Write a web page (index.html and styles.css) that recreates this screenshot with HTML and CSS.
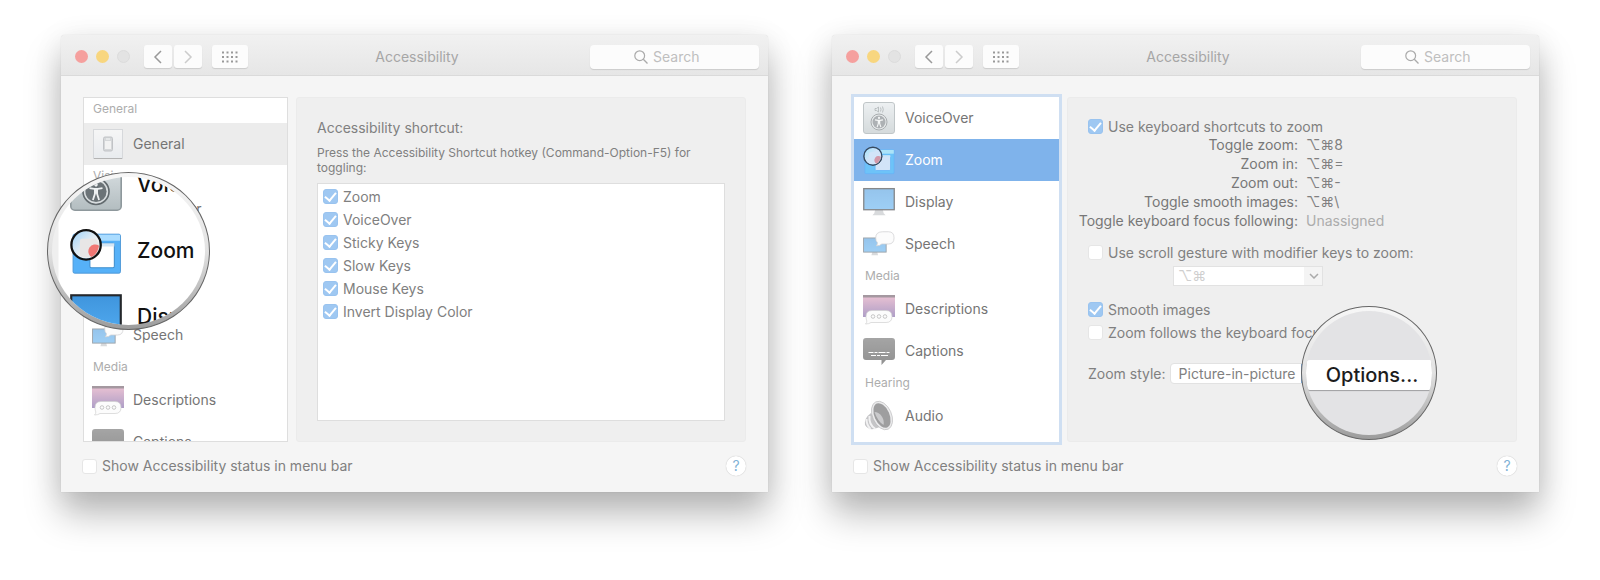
FILE: index.html
```html
<!DOCTYPE html>
<html lang="en">
<head>
<meta charset="utf-8">
<title>Accessibility</title>
<link rel="stylesheet" href="styles.css">
</head>
<body>
<svg class="sprite" aria-hidden="true">
  <defs>
    <linearGradient id="g-tile" x1="0" y1="0" x2="0" y2="1"><stop offset="0" stop-color="#dfe5e8"/><stop offset="1" stop-color="#b3bdc0"/></linearGradient>
    <linearGradient id="g-screen" x1="0" y1="0" x2="0" y2="1"><stop offset="0" stop-color="#3f95dd"/><stop offset="1" stop-color="#4fa8ee"/></linearGradient>
    <linearGradient id="g-dusk" x1="0" y1="0" x2="0" y2="1"><stop offset="0" stop-color="#dd93b0"/><stop offset="1" stop-color="#6c4f9a"/></linearGradient>
    <linearGradient id="g-dark" x1="0" y1="0" x2="0" y2="1"><stop offset="0" stop-color="#5c5c5c"/><stop offset="1" stop-color="#383838"/></linearGradient>
    <linearGradient id="g-lens" x1="0" y1="0" x2="1" y2="1"><stop offset="0" stop-color="#9fd4fb"/><stop offset=".6" stop-color="#f0f0f0"/><stop offset="1" stop-color="#dfe9f2"/></linearGradient>
    <linearGradient id="g-paper" x1="0" y1="0" x2="0" y2="1"><stop offset="0" stop-color="#ffffff"/><stop offset="1" stop-color="#e6ebf1"/></linearGradient>
  </defs>
  <symbol id="i-general" viewBox="0 0 32 32">
    <rect x="1.500" y="1.500" width="29" height="29" fill="url(#g-paper)" stroke="#c5c9ce"/>
    <path d="M2 30.500h28" stroke="#888"/>
    <rect x="11.500" y="9" width="9" height="14" rx="1.500" fill="#c3c7cb" stroke="#9ea2a8"/>
    <rect x="13" y="13" width="6" height="8" fill="#f8f8f8"/>
    <path d="M14 11h4" stroke="#fff"/>
  </symbol>
  <symbol id="i-voiceover" viewBox="0 0 32 32">
    <rect x=".5" y=".5" width="31" height="31" rx="2.500" fill="url(#g-tile)" stroke="#8e989c"/>
    <path d="M12 6.500h1.500l2-1.500v5l-2-1.500H12zM17.500 5.500q1 2 0 4M19.500 4.500q1.500 3 0 6" fill="none" stroke="#6f787c" stroke-width=".8"/>
    <circle cx="16" cy="20" r="8" fill="#d8dddf" stroke="#626a6e" stroke-width="1"/>
    <circle cx="16" cy="20" r="6.500" fill="#6b7377"/>
    <circle cx="16" cy="15.900" r="1.100" fill="#eef1f2"/>
    <path d="M12 17.900l2.900.5h2.200l2.900-.5M16 18.400v3M15.300 18.400v3.200l-1.200 3.600M16.700 18.400v3.200l1.200 3.600" fill="none" stroke="#eef1f2" stroke-width="1.100"/>
  </symbol>
  <symbol id="i-zoom" viewBox="0 0 34 32">
    <rect x="2" y="5" width="31" height="25.500" rx="1" fill="#56b1f8" stroke="#4a96d6" stroke-width=".6"/>
    <path d="M2.300 5.300h30.400v4H2.300z" fill="#aadcff"/>
    <rect x="13" y="11" width="16" height="16" rx="1" fill="#fff" stroke="#3f8ecd" stroke-width=".7"/>
    <path d="M13 11h16v2H13z" fill="#d5e6f4"/>
    <circle cx="10.500" cy="12" r="9" fill="url(#g-lens)"/>
    <path d="M8 8h9l2 4-1 5-4 3H8q-1.500 0-1.500-1.500v-9Q6.500 8 8 8z" fill="#e8e6e6"/>
    <path d="M19 12.500a4.300 4.300 0 1 0-5 7.500q4-2 5-7.500z" fill="#f07774"/>
    <circle cx="10.500" cy="12" r="9.600" fill="none" stroke="#111" stroke-width="1.500"/>
  </symbol>
  <symbol id="i-display" viewBox="0 0 34 32">
    <path d="M13 24h8l1 4 2 2H10l2-2z" fill="#b9bcc0"/>
    <rect x=".8" y="1.800" width="32.400" height="22.400" fill="url(#g-screen)" stroke="#24272b" stroke-width="1.400"/>
  </symbol>
  <symbol id="i-speech" viewBox="0 0 34 32">
    <path d="M10 24h5l1 4H9z" fill="#b9bcc0"/>
    <rect x=".6" y="9.600" width="24" height="15" fill="url(#g-screen)" stroke="#4f5a66" stroke-width="1"/>
    <path d="M21 3h6q6 0 6 6.500t-6 6.500h-7q-2 2-6 2 1.500-1.500 1.300-3.500Q13.500 13 13.500 9.500 13.500 3 21 3z" fill="#fbfbfb" stroke="#a9a9ad" stroke-width=".8"/>
  </symbol>
  <symbol id="i-descriptions" viewBox="0 0 32 32">
    <rect y="2" width="32" height="22" fill="url(#g-dusk)"/>
    <path d="M0 2h32v2.500H0z" fill="#5b4554"/>
    <path d="M9 17.500h14q6 0 6 6t-6 6H8q-2 1.500-5.500 1.500 1.500-1.500 1.300-3Q3 26 3 23.500q0-6 6-6z" fill="#fafafa" stroke="#aaa" stroke-width=".7"/>
    <g fill="none" stroke="#999" stroke-width="1"><circle cx="10" cy="23.500" r="1.800"/><circle cx="16" cy="23.500" r="1.800"/><circle cx="22" cy="23.500" r="1.800"/></g>
  </symbol>
  <symbol id="i-captions" viewBox="0 0 32 32">
    <path d="M3 3h26q3 0 3 3v16q0 3-3 3h-6l-4.500 5v-5H3q-3 0-3-3V6q0-3 3-3z" fill="url(#g-dark)"/>
    <path d="M5.500 17.500h21M8 20.500h17" stroke="#fff" stroke-width="1" stroke-dasharray="5 1 3 1 7 1"/>
  </symbol>
  <symbol id="i-audio" viewBox="0 0 32 32">
    <path d="M8 13Q1 18 2 25q3 5 9 4l9-3z" fill="#96969a"/>
    <path d="M6.500 16q-1 9 6 13M3.500 19q0 6 4 10" stroke="#e8e8ea" stroke-width="2" fill="none"/>
    <ellipse cx="19" cy="15.500" rx="8.500" ry="14" transform="rotate(-24 19 15.500)" fill="#4f4f52" stroke="#dcdcde" stroke-width="2"/>
    <path d="M11.500 12q4 0 7 4t2 9q-6-4-9-13z" fill="#a0a0a3"/>
    <ellipse cx="19" cy="15.500" rx="9.500" ry="15" transform="rotate(-24 19 15.500)" fill="none" stroke="#7f7f82" stroke-width=".6"/>
  </symbol>
  <symbol id="i-back" viewBox="0 0 12 16"><path d="M9 2 3 8l6 6" fill="none" stroke="currentColor" stroke-width="1.500"/></symbol>
  <symbol id="i-forward" viewBox="0 0 12 16"><path d="m3 2 6 6-6 6" fill="none" stroke="currentColor" stroke-width="1.500"/></symbol>
  <symbol id="i-grid" viewBox="0 0 16 12"><path d="M0 1.500h16M0 6h16M0 10.500h16" stroke="currentColor" stroke-width="2" stroke-dasharray="2 2.500"/></symbol>
  <symbol id="i-search" viewBox="0 0 14 14"><circle cx="5.700" cy="5.700" r="4.900" fill="none" stroke="currentColor" stroke-width="1.200"/><path d="m9.300 9.300 4.200 4.200" stroke="currentColor" stroke-width="1.300"/></symbol>
</svg>

<main class="stage">
  <section class="window" aria-label="Accessibility shortcut settings">
    <header class="titlebar">
      <div class="tools">
        <div class="lights">
          <button class="light close" aria-label="Close"></button>
          <button class="light minimize" aria-label="Minimize"></button>
          <button class="light full" aria-label="Full screen" disabled></button>
        </div>
        <div class="nav">
          <button class="tool" aria-label="Back"><svg class="arrow"><use href="#i-back"/></svg></button>
          <button class="tool" aria-label="Forward" disabled><svg class="arrow"><use href="#i-forward"/></svg></button>
        </div>
        <button class="tool wide" aria-label="Show all"><svg class="dots"><use href="#i-grid"/></svg></button>
      </div>
      <h1 class="title">Accessibility</h1>
      <label class="search"><svg class="glass"><use href="#i-search"/></svg><input type="search" placeholder="Search" aria-label="Search"></label>
    </header>
    <div class="panes">
      <nav class="sidebar" aria-label="Categories">
        <h2 class="group first">General</h2>
        <a class="item current" href="#general"><svg class="icon"><use href="#i-general"/></svg>General</a>
        <h2 class="group">Vision</h2>
        <a class="item" href="#voiceover"><svg class="icon"><use href="#i-voiceover"/></svg>VoiceOver</a>
        <a class="item" href="#zoom"><svg class="icon"><use href="#i-zoom"/></svg>Zoom</a>
        <a class="item" href="#display"><svg class="icon"><use href="#i-display"/></svg>Display</a>
        <a class="item" href="#speech"><svg class="icon"><use href="#i-speech"/></svg>Speech</a>
        <h2 class="group">Media</h2>
        <a class="item" href="#descriptions"><svg class="icon"><use href="#i-descriptions"/></svg>Descriptions</a>
        <a class="item" href="#captions"><svg class="icon"><use href="#i-captions"/></svg>Captions</a>
      </nav>
      <div class="panel shortcut-panel">
        <h2 class="heading">Accessibility shortcut:</h2>
        <p class="hint">Press the Accessibility Shortcut hotkey (Command-Option-F5) for toggling:</p>
        <div class="options">
          <label class="check"><input type="checkbox" checked>Zoom</label>
          <label class="check"><input type="checkbox" checked>VoiceOver</label>
          <label class="check"><input type="checkbox" checked>Sticky Keys</label>
          <label class="check"><input type="checkbox" checked>Slow Keys</label>
          <label class="check"><input type="checkbox" checked>Mouse Keys</label>
          <label class="check"><input type="checkbox" checked>Invert Display Color</label>
        </div>
      </div>
    </div>
    <footer class="footer">
      <label class="check"><input type="checkbox">Show Accessibility status in menu bar</label>
      <button class="help" aria-label="Help">?</button>
    </footer>
    <div class="lens lens-list" aria-hidden="true">
      <div class="lens-view">
        <div class="lens-row"><svg class="lens-icon"><use href="#i-voiceover"/></svg>VoiceOver</div>
        <div class="lens-row"><svg class="lens-icon"><use href="#i-zoom"/></svg>Zoom</div>
        <div class="lens-row"><svg class="lens-icon"><use href="#i-display"/></svg>Display</div>
      </div>
    </div>
  </section>

  <section class="window" aria-label="Zoom settings">
    <header class="titlebar">
      <div class="tools">
        <div class="lights">
          <button class="light close" aria-label="Close"></button>
          <button class="light minimize" aria-label="Minimize"></button>
          <button class="light full" aria-label="Full screen" disabled></button>
        </div>
        <div class="nav">
          <button class="tool" aria-label="Back"><svg class="arrow"><use href="#i-back"/></svg></button>
          <button class="tool" aria-label="Forward" disabled><svg class="arrow"><use href="#i-forward"/></svg></button>
        </div>
        <button class="tool wide" aria-label="Show all"><svg class="dots"><use href="#i-grid"/></svg></button>
      </div>
      <h1 class="title">Accessibility</h1>
      <label class="search"><svg class="glass"><use href="#i-search"/></svg><input type="search" placeholder="Search" aria-label="Search"></label>
    </header>
    <div class="panes">
      <nav class="sidebar focused" aria-label="Categories">
        <a class="item" href="#voiceover"><svg class="icon"><use href="#i-voiceover"/></svg>VoiceOver</a>
        <a class="item selected" href="#zoom"><svg class="icon"><use href="#i-zoom"/></svg>Zoom</a>
        <a class="item" href="#display"><svg class="icon"><use href="#i-display"/></svg>Display</a>
        <a class="item" href="#speech"><svg class="icon"><use href="#i-speech"/></svg>Speech</a>
        <h2 class="group">Media</h2>
        <a class="item" href="#descriptions"><svg class="icon"><use href="#i-descriptions"/></svg>Descriptions</a>
        <a class="item" href="#captions"><svg class="icon"><use href="#i-captions"/></svg>Captions</a>
        <h2 class="group">Hearing</h2>
        <a class="item" href="#audio"><svg class="icon"><use href="#i-audio"/></svg>Audio</a>
      </nav>
      <div class="panel zoom-panel">
        <label class="check"><input type="checkbox" checked>Use keyboard shortcuts to zoom</label>
        <dl class="keys">
          <dt>Toggle zoom:</dt><dd>⌥⌘8</dd>
          <dt>Zoom in:</dt><dd>⌥⌘=</dd>
          <dt>Zoom out:</dt><dd>⌥⌘-</dd>
          <dt>Toggle smooth images:</dt><dd>⌥⌘\</dd>
          <dt>Toggle keyboard focus following:</dt><dd class="none">Unassigned</dd>
        </dl>
        <label class="check"><input type="checkbox">Use scroll gesture with modifier keys to zoom:</label>
        <div class="combo">
          <select aria-label="Modifier keys" disabled><option>⌥⌘</option></select>
          <svg class="chevron" viewBox="0 0 10 6"><path d="m1 1 4 4 4-4" fill="none" stroke="currentColor" stroke-width="1.500"/></svg>
        </div>
        <label class="check"><input type="checkbox" checked>Smooth images</label>
        <label class="check"><input type="checkbox">Zoom follows the keyboard focus</label>
        <div class="style-row">
          <label for="zoom-style">Zoom style:</label>
          <select id="zoom-style" class="popup"><option>Picture-in-picture</option><option>Fullscreen</option></select>
        </div>
        <div class="lens lens-options">
          <div class="lens-view"><button class="lens-button">Options...</button></div>
        </div>
      </div>
    </div>
    <footer class="footer">
      <label class="check"><input type="checkbox">Show Accessibility status in menu bar</label>
      <button class="help" aria-label="Help">?</button>
    </footer>
  </section>
</main>
</body>
</html>
```
FILE: styles.css
```css
* { box-sizing: border-box; }

body {
  margin: 0;
  background: #fff;
  color: #808080;
  font: 14px/18px Inter, "DejaVu Sans", sans-serif;
}

h1, h2, p, dl, dd { margin: 0; font-weight: 400; }
button, input, select { font: inherit; color: inherit; }
button { border: 0; padding: 0; }
.sprite { position: absolute; width: 0; height: 0; }

.stage {
  display: grid;
  grid-template-columns: 1fr 1fr;
  gap: 64px;
  padding: 35px 61px 88px;
}

.window {
  position: relative;
  background: #f5f5f5;
  border-radius: 4px 4px 0 0;
  box-shadow: 0 0 1px rgba(0, 0, 0, .2), 0 22px 36px rgba(0, 0, 0, .27), 0 4px 30px rgba(0, 0, 0, .08);
}

/* Title bar */
.titlebar {
  display: grid;
  grid-template-columns: 1fr auto 1fr;
  align-items: center;
  height: 41px;
  padding: 3px 9px 0 14px;
  border-bottom: 1px solid #dadada;
  border-radius: 4px 4px 0 0;
  background: linear-gradient(#f1f1f1, #e6e6e6);
}
.tools { display: flex; align-items: center; gap: 10px; }
.lights { display: flex; gap: 8px; padding-right: 4px; }
.light { width: 13px; height: 13px; border-radius: 50%; }
.close { background: #f5a09e; }
.minimize { background: #f8d67f; }
.full { background: #e3e3e3; border: 1px solid #dcdcdc; }
.nav { display: flex; gap: 2px; }
.tool {
  display: grid;
  place-items: center;
  width: 28px;
  height: 23px;
  border-radius: 3px;
  background: #fcfcfc;
  box-shadow: 0 1px 1px rgba(0, 0, 0, .12);
  color: #999;
}
.tool:disabled { color: #ccc; }
.wide { width: 36px; }
.arrow { width: 12px; height: 16px; }
.dots { width: 16px; height: 12px; }
.title { font-size: 14px; color: #a6a6a6; }
.search {
  justify-self: end;
  display: flex;
  align-items: center;
  justify-content: center;
  gap: 5px;
  width: 169px;
  height: 24px;
  padding-right: 10px;
  border-radius: 4px;
  background: #fcfcfc;
  box-shadow: 0 1px 1px rgba(0, 0, 0, .12);
  color: #aaa;
}
.glass { width: 14px; height: 14px; }
.search input { width: 52px; padding: 0; border: 0; outline: 0; background: none; appearance: none; }
.search input::-webkit-search-cancel-button { display: none; }
.search input::placeholder { color: #bfbfbf; }

/* Panes */
.panes {
  display: grid;
  grid-template-columns: 205px 1fr;
  gap: 8px;
  height: 366px;
  padding: 21px 22px 0;
}
.sidebar { overflow: hidden; border: 1px solid #dedede; background: #fff; }
.sidebar.focused { border: 0; box-shadow: 0 0 0 3px #cfdff2; }
.group {
  height: 23px;
  padding-left: 9px;
  font-size: 12px;
  line-height: 22px;
  color: #adadad;
}
.first { height: 25px; }
.item {
  display: flex;
  align-items: center;
  gap: 9px;
  height: 42px;
  padding-left: 8px;
  color: #757575;
  text-decoration: none;
}
.focused .item { gap: 10px; padding-left: 9px; }
.focused .group { padding-left: 11px; }
.icon { width: 32px; height: 32px; opacity: .55; }
.current { background: #ececec; }
.selected { background: #7fb3eb; color: #fff; }
.selected .icon { opacity: 1; filter: opacity(.65) brightness(1.150); }

.panel {
  position: relative;
  padding: 20px;
  border: 1px solid #ebebeb;
  border-radius: 3px;
  background: #efefef;
}

/* Check boxes */
.check { display: flex; align-items: center; gap: 5px; height: 23px; }
.check input {
  display: grid;
  place-items: center;
  width: 15px;
  height: 15px;
  margin: 0;
  border: 1px solid #e6e6e6;
  border-radius: 3px;
  background: #fff;
  appearance: none;
}
.check input:checked { border-color: #99c3ef; background: #9fc8f2; }
.check input:checked::after {
  content: "";
  width: 5px;
  height: 9px;
  margin-bottom: 2px;
  border: solid #fff;
  border-width: 0 2px 2px 0;
  transform: rotate(40deg);
}

/* Shortcut panel */
.shortcut-panel { display: flex; flex-direction: column; }
.heading { font-size: 14px; line-height: 20px; }
.hint { padding: 7px 20px 8px 0; font-size: 12px; line-height: 15px; }
.options { flex: 1; padding: 1px 5px; border: 1px solid #dedede; background: #fff; }

/* Zoom panel */
.zoom-panel { padding-top: 17px; }
.keys {
  display: grid;
  grid-template-columns: 210px 1fr;
  column-gap: 8px;
  margin: -3px 0 11px;
  line-height: 19px;
}
.keys dt { justify-self: end; white-space: nowrap; color: #777; }
.keys .none { color: #acacac; }
.combo {
  position: relative;
  width: 150px;
  margin: 2px 0 12px 85px;
}
.combo select {
  display: block;
  width: 100%;
  height: 20px;
  padding: 0 4px;
  border: 1px solid #e2e2e2;
  background: linear-gradient(to left, #f4f4f4 18px, #fff 18px);
  color: #cfcfcf;
  opacity: 1;
  appearance: none;
}
.chevron { position: absolute; right: 4px; top: 7px; width: 10px; height: 6px; color: #aaa; }
.style-row { display: flex; align-items: center; gap: 4px; margin-top: 19px; }
.popup {
  width: 150px;
  height: 21px;
  padding: 0 8px;
  border: 1px solid #e2e2e2;
  border-radius: 4px;
  background: linear-gradient(to left, #7fb3eb 18px, #fff 18px);
  appearance: none;
}

/* Footer */
.footer {
  display: flex;
  align-items: center;
  justify-content: space-between;
  height: 50px;
  padding: 0 22px 2px 21px;
}
.help {
  width: 20px;
  height: 20px;
  border-radius: 50%;
  background: #fff;
  box-shadow: 0 0 1px rgba(0, 0, 0, .3);
  color: #7fb2d6;
}

/* Magnifiers float over the windows */
.lens {
  position: absolute;
  padding: 4px;
  border: 1px solid #666;
  border-radius: 50%;
  background: linear-gradient(#f7f7f7, #e2e2e2 50%, #9c9c9c);
}
.lens-view {
  display: flex;
  flex-direction: column;
  justify-content: center;
  height: 100%;
  overflow: hidden;
  border-radius: 50%;
}
.lens-list { left: -14px; top: 137px; width: 163px; height: 158px; }
.lens-list .lens-view { background: linear-gradient(to right, #efefef 6px, #fff 7px); }
.lens-row {
  display: flex;
  flex: none;
  align-items: center;
  gap: 15px;
  height: 66px;
  padding-left: 18px;
  color: #111;
  font-size: 21px;
  font-weight: 500;
}
.lens-icon { flex: none; width: 52px; height: 52px; }
.lens-options { left: 233px; top: 208px; width: 136px; height: 134px; }
.lens-options .lens-view { background: #e3e3e5; }
.lens-button {
  flex: none;
  height: 30px;
  margin-top: 4px;
  padding-left: 6px;
  border-radius: 4px 0 0 4px;
  background: #fff;
  box-shadow: 0 1px 1px rgba(0, 0, 0, .3);
  color: #1c1c1c;
  font-size: 20px;
  font-weight: 500;
}
```
